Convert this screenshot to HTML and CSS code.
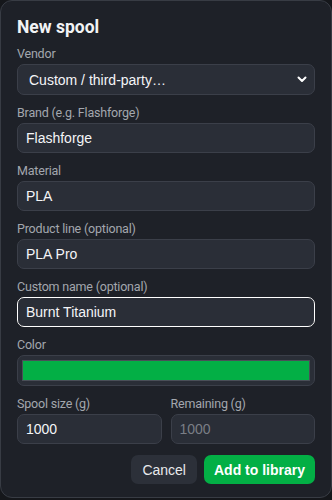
FILE: index.html
```html
<!DOCTYPE html>
<html lang="en">
<head>
<meta charset="utf-8">
<title>New spool</title>
<link rel="stylesheet" href="styles.css">
</head>
<body>
<div class="dialog">
  <h2 class="title">New spool</h2>
  <div class="field">
    <label class="label">Vendor</label>
    <div class="select">
      <span>Custom / third-party…</span>
      <svg class="chev" width="10" height="7" viewBox="0 0 10 7"><path d="M1.5 1.5 L5 5 L8.5 1.5" fill="none" stroke="#fff" stroke-width="2" stroke-linecap="round" stroke-linejoin="round"/></svg>
    </div>
  </div>
  <div class="field">
    <label class="label">Brand (e.g. Flashforge)</label>
    <div class="input">Flashforge</div>
  </div>
  <div class="field">
    <label class="label">Material</label>
    <div class="input">PLA</div>
  </div>
  <div class="field">
    <label class="label">Product line (optional)</label>
    <div class="input">PLA Pro</div>
  </div>
  <div class="field">
    <label class="label">Custom name (optional)</label>
    <div class="input focus">Burnt Titanium</div>
  </div>
  <div class="field">
    <label class="label">Color</label>
    <div class="color"><div class="swatch"></div></div>
  </div>
  <div class="row">
    <div class="field">
      <label class="label">Spool size (g)</label>
      <div class="input">1000</div>
    </div>
    <div class="field">
      <label class="label">Remaining (g)</label>
      <div class="input placeholder">1000</div>
    </div>
  </div>
  <div class="actions">
    <button class="btn cancel">Cancel</button>
    <button class="btn primary">Add to library</button>
  </div>
</div>
</body>
</html>
```
FILE: styles.css
```css
html, body {
  margin: 0;
  padding: 0;
  background: #15171b;
}
body {
  width: 332px;
  height: 500px;
  font-family: Roboto, "Segoe UI", sans-serif;
}
.dialog {
  box-sizing: border-box;
  width: 332px;
  height: 498px;
  background: #1e2128;
  border: 1px solid #383c44;
  border-radius: 12px;
  padding: 16px 16px 0 16px;
}
.title {
  margin: 0 0 9px 0;
  font-size: 17.5px;
  line-height: 20px;
  font-weight: 700;
  color: #f2f3f5;
}
.field {
  display: flex;
  flex-direction: column;
  margin-bottom: 10px;
}
.label {
  font-size: 12.5px;
  line-height: 16px;
  letter-spacing: -0.2px;
  color: #a3a7ae;
  margin-bottom: 2px;
}
.select, .input, .color {
  box-sizing: border-box;
  height: 30px;
  border: 1px solid #3b3f49;
  border-radius: 7px;
  background: #2a2e37;
  color: #f4f5f7;
  font-family: "Liberation Sans", Arial, sans-serif;
  font-size: 14px;
  display: flex;
  align-items: center;
}
.select {
  height: 31px;
  padding: 0 7px 0 11px;
  justify-content: space-between;
}
.chev {
  display: block;
}
.input {
  padding: 0 8px;
}
.input.focus {
  border-color: #0b0c0f;
  outline: 1.5px solid #ffffff;
  outline-offset: -1px;
}
.input.placeholder {
  color: #7a7e86;
}
.color {
  height: 31px;
  padding: 4px;
}
.swatch {
  width: 100%;
  height: 100%;
  background: #03af45;
  border: 1px solid #4a4f58;
  box-sizing: border-box;
}
.row {
  display: grid;
  grid-template-columns: 1fr 1fr;
  gap: 9px;
}
.row .field {
  margin-bottom: 11px;
}
.actions {
  display: flex;
  justify-content: flex-end;
  gap: 7px;
}
.btn {
  height: 29px;
  border: none;
  border-radius: 7px;
  font-family: "Liberation Sans", Arial, sans-serif;
  font-size: 14px;
  padding: 0 11px;
  cursor: pointer;
}
.cancel {
  background: #2c3039;
  color: #e8e9ec;
}
.primary {
  background: #03af45;
  color: #ffffff;
  font-weight: bold;
  padding: 0 10px;
}
```
